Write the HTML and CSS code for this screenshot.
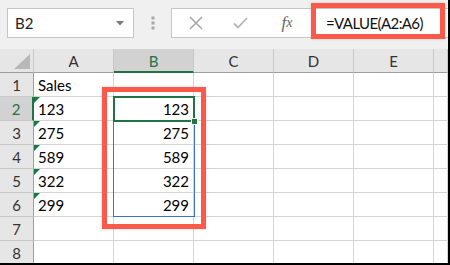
FILE: index.html
```html
<!DOCTYPE html>
<html lang="en">
<head>
    <meta charset="UTF-8">
    <title>VALUE formula</title>
    <link rel="stylesheet" href="styles.css">
</head>
<body>

<div class="window">
    <div class="toolbar">
        <div class="namebox">
            <span>B2</span>
            <svg class="arrow" width="8" height="5" viewBox="0 0 8 5"><path d="M0 0h8L4 4.5z" fill="#7a7a7a"/></svg>
        </div>
        <div class="grip">
            <svg width="4" height="14" viewBox="0 0 4 14"><rect x="0.5" y="0.5" width="3" height="3" fill="#a8a8a8"/><rect x="0.5" y="5.5" width="3" height="3" fill="#a8a8a8"/><rect x="0.5" y="10.5" width="3" height="3" fill="#a8a8a8"/></svg>
        </div>
        <div class="formula">
            <span class="btn">
                <svg width="14" height="14" viewBox="0 0 14 14"><path d="M1 1L13 13M13 1L1 13" stroke="#a8a8a8" stroke-width="1.6" fill="none"/></svg>
            </span>
            <span class="btn">
                <svg width="15" height="12" viewBox="0 0 15 12"><path d="M1 6.5L5 10.5L14 1" stroke="#b4b4b4" stroke-width="1.8" fill="none"/></svg>
            </span>
            <span class="btn fx">f<span class="x">x</span></span>
            <span class="input">=VALUE(A2:A6)</span>
        </div>
        <div class="callout formula-callout"></div>
    </div>

    <div class="sheet">
        <div class="hd corner">
            <svg width="16" height="15" viewBox="0 0 16 15"><path d="M16 0V15H0z" fill="#b8b8b8"/></svg>
        </div>
        <div class="hd col">A</div>
        <div class="hd col active">B</div>
        <div class="hd col">C</div>
        <div class="hd col">D</div>
        <div class="hd col">E</div>
        <div class="hd col"></div>

        <div class="hd row">1</div>
        <div class="cell">Sales</div><div class="cell"></div><div class="cell"></div><div class="cell"></div><div class="cell"></div><div class="cell"></div>

        <div class="hd row active">2</div>
        <div class="cell text-num">123</div><div class="cell num">123</div><div class="cell"></div><div class="cell"></div><div class="cell"></div><div class="cell"></div>

        <div class="hd row">3</div>
        <div class="cell text-num">275</div><div class="cell num">275</div><div class="cell"></div><div class="cell"></div><div class="cell"></div><div class="cell"></div>

        <div class="hd row">4</div>
        <div class="cell text-num">589</div><div class="cell num">589</div><div class="cell"></div><div class="cell"></div><div class="cell"></div><div class="cell"></div>

        <div class="hd row">5</div>
        <div class="cell text-num">322</div><div class="cell num">322</div><div class="cell"></div><div class="cell"></div><div class="cell"></div><div class="cell"></div>

        <div class="hd row">6</div>
        <div class="cell text-num">299</div><div class="cell num">299</div><div class="cell"></div><div class="cell"></div><div class="cell"></div><div class="cell"></div>

        <div class="hd row">7</div>
        <div class="cell"></div><div class="cell"></div><div class="cell"></div><div class="cell"></div><div class="cell"></div><div class="cell"></div>

        <div class="hd row">8</div>
        <div class="cell"></div><div class="cell"></div><div class="cell"></div><div class="cell"></div><div class="cell"></div><div class="cell"></div>

        <!-- selection and callout overlays -->
        <div class="range"></div>
        <div class="active-cell"></div>
        <div class="handle"></div>
        <div class="callout column-callout"></div>
    </div>
</div>

</body>
</html>
```

FILE: styles.css
```css
* { box-sizing: border-box; }

body {
    margin: 0;
    font-family: Lato, "Liberation Sans", sans-serif;
    color: #000;
}

.window {
    width: 450px;
    height: 265px;
    overflow: hidden;
    border-right: 2px solid #000;
    border-bottom: 2px solid #000;
    background: #fff;
}

/* formula bar */
.toolbar {
    position: relative;
    display: flex;
    align-items: flex-start;
    height: 49px;
    padding-top: 8px;
    background: #f0f0f0;
}

.namebox {
    display: flex;
    align-items: center;
    justify-content: space-between;
    width: 127px;
    height: 30px;
    margin-left: 7px;
    padding: 0 9px 0 7px;
    background: #fff;
    border: 1px solid #c6c6c6;
    font-size: 15px;
    color: #222;
}

.grip {
    display: flex;
    justify-content: center;
    align-items: center;
    width: 37px;
    height: 30px;
}

.formula {
    display: flex;
    align-items: center;
    flex: 1;
    height: 30px;
    background: #fff;
    border: 1px solid #c6c6c6;
    border-right: none;
}

.btn {
    display: flex;
    justify-content: center;
    align-items: center;
    width: 45px;
    height: 28px;
}

.btn:first-child { margin-left: 1px; }

.fx {
    font-family: "Liberation Serif", serif;
    font-style: italic;
    font-size: 17px;
    color: #666;
    width: 48px;
}

.fx .x { font-size: 14px; }

.input {
    margin-left: 15px;
    font-size: 15px;
    letter-spacing: -0.6px;
    color: #111;
}

.callout {
    position: absolute;
    border: 5px solid #fb5a4b;
    box-shadow: 0 0 3px rgba(0, 0, 0, 0.15);
}

.formula-callout {
    left: 311px;
    top: 3px;
    width: 134px;
    height: 36px;
}

/* grid */
.sheet {
    position: relative;
    display: grid;
    grid-template-columns: 34px repeat(5, 80px) 1fr;
    grid-template-rows: 24px repeat(8, 24px);
    font-size: 15px;
}

.hd {
    display: flex;
    justify-content: center;
    align-items: center;
    background: #e6e6e6;
    color: #333;
}

.corner {
    justify-content: flex-end;
    align-items: flex-end;
    padding: 0 3px 3px 0;
    border-right: 1px solid #c8c8c8;
    border-bottom: 1px solid #9f9f9f;
}

.col {
    border-right: 1px solid #c8c8c8;
    border-bottom: 1px solid #9f9f9f;
    padding-top: 1px;
}

.row {
    border-right: 1px solid #9f9f9f;
    border-bottom: 1px solid #c8c8c8;
}

.col.active {
    background: #d2d2d2;
    color: #217346;
    border-bottom: 2px solid #217346;
}

.row.active {
    background: #d2d2d2;
    color: #217346;
    border-right: 2px solid #217346;
}

.cell {
    display: flex;
    align-items: center;
    padding: 0 4px;
    border-right: 1px solid #d4d4d4;
    border-bottom: 1px solid #d4d4d4;
}

.num { justify-content: flex-end; }

.text-num { position: relative; }

.text-num::before {
    content: "";
    position: absolute;
    left: 0;
    top: 0;
    border-top: 6px solid #107c41;
    border-right: 6px solid transparent;
}

.range {
    position: absolute;
    left: 113px;
    top: 47px;
    width: 82px;
    height: 121px;
    border: 1px solid #3f6fc6;
}

.active-cell {
    position: absolute;
    left: 113px;
    top: 47px;
    width: 82px;
    height: 26px;
    border: 2px solid #217346;
}

.handle {
    position: absolute;
    left: 191px;
    top: 69px;
    width: 7px;
    height: 7px;
    background: #217346;
    border: 1px solid #fff;
}

.column-callout {
    left: 102px;
    top: 38px;
    width: 104px;
    height: 142px;
}
```
